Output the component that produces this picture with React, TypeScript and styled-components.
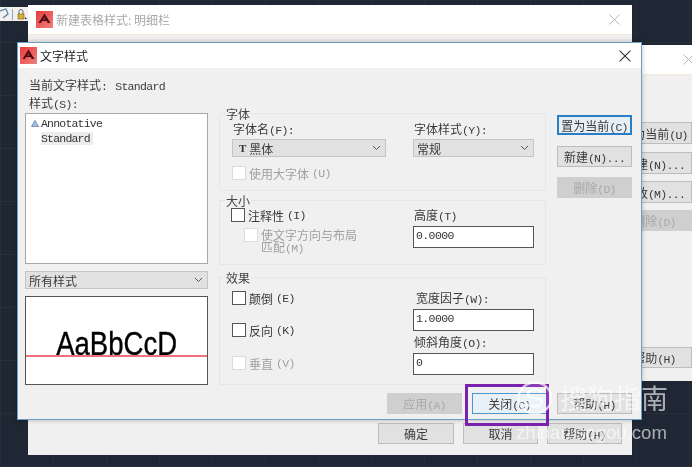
import React from "react";
import styled, { createGlobalStyle } from "styled-components";

const Global = createGlobalStyle`
  html, body { margin: 0; padding: 0; background: #1e2733; }
  body { width: 692px; height: 467px; overflow: hidden; }
  * { box-sizing: border-box; }
`;

const Desktop = styled.div`
  position: relative;
  width: 692px;
  height: 467px;
  overflow: hidden;
  font-family: "Noto Sans CJK SC", "Liberation Sans", sans-serif;
  font-size: 12px;
  color: #3a3a3a;
  filter: blur(0.35px);
  background-color: #1e2733;
  background-image:
    repeating-linear-gradient(90deg, rgba(255,255,255,0.035) 0 1px, transparent 1px 53px),
    repeating-linear-gradient(0deg, rgba(255,255,255,0.035) 0 1px, transparent 1px 53px);
`;

const Toolbar = styled.div`
  position: absolute;
  left: 0;
  top: 7px;
  width: 30px;
  height: 14px;
  background: #f0f0f0;
  display: flex;
  align-items: center;
  gap: 3px;
`;
const ToolSep = styled.span`
  width: 1px;
  height: 11px;
  background: #a0a0a0;
`;

const Win = styled.div<{ $l: number; $t: number; $w: number; $h: number; $active?: boolean }>`
  position: absolute;
  left: ${p => p.$l}px;
  top: ${p => p.$t}px;
  width: ${p => p.$w}px;
  height: ${p => p.$h}px;
  background: #f0f0f0;
  display: flex;
  flex-direction: column;
  ${p => p.$active ? "border: 1px solid #6d9fc6; box-shadow: 0 0 5px rgba(0,0,0,0.25);" : ""}
`;
const TitleBar = styled.div<{ $h: number; $faded?: boolean; $pl: number; $pr: number }>`
  flex: none;
  height: ${p => p.$h}px;
  background: #fff;
  display: flex;
  align-items: center;
  gap: 3px;
  padding: 0 ${p => p.$pr}px 0 ${p => p.$pl}px;
  font-size: 12px;
  color: ${p => p.$faded ? "#a8a8a8" : "#222"};
  ${p => p.$faded ? "border-bottom: 1px solid #f6e8d8;" : ""}
`;
const TitleText = styled.span`
  flex: 1;
  white-space: nowrap;
`;
const Body = styled.div`
  flex: 1;
  display: flex;
  flex-direction: column;
  padding: 9px 9px 0 7px;
  min-height: 0;
`;
const L = styled.span`
  font-family: "Liberation Mono", monospace;
  font-size: 11.5px;
  letter-spacing: -0.7px;
`;
const StdName = styled(L)`
  margin-left: 8px;
`;
const CurrentRow = styled.div`
  height: 16px;
  line-height: 16px;
  padding-left: 4px;
  white-space: nowrap;
`;
const StyleLabel = styled.div`
  height: 14px;
  line-height: 14px;
  margin-top: 3px;
  padding-left: 4px;
`;
const Columns = styled.div`
  display: grid;
  grid-template-columns: 183px 327px 75px;
  column-gap: 11px;
  margin-top: 3px;
`;
const LeftCol = styled.div`
  display: flex;
  flex-direction: column;
  gap: 7px;
`;
const ListBox = styled.div`
  height: 151px;
  background: #fff;
  border: 1px solid #a8a8a8;
  padding: 2px 5px 0 5px;
  display: flex;
  flex-direction: column;
`;
const ListItem = styled.div`
  display: flex;
  align-items: center;
  height: 15px;
  font-family: "Liberation Mono", monospace;
  font-size: 11.5px;
  letter-spacing: -0.8px;
  color: #333;
  gap: 2px;
`;
const ItemText = styled.span<{ $sel?: boolean }>`
  padding-right: 3px;
  margin-left: ${p => p.$sel ? "10px" : "0"};
  background: ${p => p.$sel ? "#ececec" : "transparent"};
`;
const Combo = styled.div<{ $w?: number; $h?: number }>`
  width: ${p => p.$w ? `${p.$w}px` : "100%"};
  height: ${p => p.$h ?? 18}px;
  background: #e1e1e1;
  border: 1px solid #c4c4c4;
  display: flex;
  align-items: center;
  padding: 0 4px 0 3px;
  gap: 2px;
`;
const ComboText = styled.span`
  flex: 1;
  white-space: nowrap;
`;
const FontGlyph = styled.span`
  font-family: "Liberation Serif", serif;
  font-weight: bold;
  font-size: 11px;
  color: #333;
  margin: 0 1px 0 3px;
`;
const Preview = styled.div`
  position: relative;
  height: 89px;
  background: #fff;
  border: 1px solid #555;
  display: flex;
  align-items: flex-end;
  justify-content: center;
`;
const PreviewText = styled.span`
  font-family: "Liberation Sans", sans-serif;
  font-size: 34px;
  line-height: 34px;
  color: #000;
  -webkit-text-stroke: 0.4px #000;
  transform: scaleX(0.81);
  white-space: nowrap;
  margin-bottom: 24px;
`;
const Baseline = styled.div`
  position: absolute;
  left: 0;
  right: 0;
  bottom: 27px;
  height: 2px;
  background: #f0707c;
`;

const MidCol = styled.div`
  display: flex;
  flex-direction: column;
`;
const Group = styled.div<{ $h: number; $mt?: number; $pl: number; $pt: number }>`
  position: relative;
  height: ${p => p.$h}px;
  margin-top: ${p => p.$mt ?? 0}px;
  border: 1px solid #e6e6e6;
  padding: ${p => p.$pt}px 0 0 ${p => p.$pl}px;
  display: grid;
  grid-template-columns: ${p => 193 - p.$pl}px 121px;
`;
const Legend = styled.span`
  position: absolute;
  left: 5px;
  top: -7px;
  height: 14px;
  line-height: 14px;
  padding: 0 1px;
  background: #f0f0f0;
  color: #444;
`;
const Stack = styled.div`
  display: flex;
  flex-direction: column;
`;
const FieldLabel = styled.div<{ $pl?: number; $mt?: number; $mb?: number }>`
  height: 14px;
  line-height: 14px;
  white-space: nowrap;
  padding-left: ${p => p.$pl ?? 1}px;
  margin-top: ${p => p.$mt ?? 0}px;
  margin-bottom: ${p => p.$mb ?? 3}px;
`;
const Check = styled.div<{ $off?: boolean; $mt?: number; $ml?: number }>`
  display: flex;
  align-items: center;
  gap: 3px;
  height: 14px;
  margin-top: ${p => p.$mt ?? 0}px;
  margin-left: ${p => p.$ml ?? 0}px;
  color: ${p => p.$off ? "#a0a0a0" : "#3a3a3a"};
  white-space: nowrap;
`;
const Box = styled.span<{ $off?: boolean }>`
  flex: none;
  width: 14px;
  height: 14px;
  background: #fff;
  border: 1px solid ${p => p.$off ? "#dcdcdc" : "#555"};
`;
const TwoLine = styled.div`
  font-size: 12px;
  line-height: 12px;
  color: #a0a0a0;
  white-space: nowrap;
  margin-top: 1px;
`;
const CheckTop = styled(Check)`
  align-items: flex-start;
  height: 25px;
`;
const Input = styled.div`
  width: 121px;
  height: 22px;
  background: #fff;
  border: 1px solid #555;
  padding: 0 0 3px 2px;
  display: flex;
  align-items: center;
  font-family: "Liberation Mono", monospace;
  font-size: 11.5px;
  letter-spacing: -0.6px;
  color: #333;
`;
const RightCol = styled.div`
  display: flex;
  flex-direction: column;
  padding-top: 2px;
`;
const Btn = styled.div<{ $kind?: "focus" | "hover" | "off"; $mt?: number; $push?: boolean; $h?: number; $w?: number }>`
  width: ${p => p.$w ?? 75}px;
  height: ${p => p.$h ?? 21}px;
  flex: none;
  margin-top: ${p => p.$push ? "auto" : `${p.$mt ?? 0}px`};
  display: flex;
  align-items: center;
  justify-content: center;
  white-space: nowrap;
  color: ${p => p.$kind === "off" ? "#a8a8a8" : "#3a3a3a"};
  background: ${p => p.$kind === "off" ? "#cfcfcf" : p.$kind === "hover" ? "#e9f1f8" : p.$kind === "focus" ? "#e6eef6" : "#e1e1e1"};
  border: ${p => p.$kind === "focus" ? "2px solid #2a7fc4" : p.$kind === "hover" ? "1px solid #4a97d0" : p.$kind === "off" ? "1px solid #cfcfcf" : "1px solid #bdbdbd"};
`;
const BottomRow = styled.div`
  display: flex;
  justify-content: flex-end;
  gap: 10px;
  margin-top: 8px;
`;
const BackButtons = styled.div`
  margin-top: auto;
  display: flex;
  justify-content: flex-end;
  gap: 9px;
  padding: 0 10px 11px 0;
`;
const SideButtons = styled.div`
  flex: 1;
  display: flex;
  flex-direction: column;
  padding: 47px 0 13px 17px;
`;
const Highlight = styled.div`
  position: absolute;
  left: 465px;
  top: 384px;
  width: 84px;
  height: 42px;
  border: 3px solid #7a22ae;
`;
const Mark = styled.div`
  position: absolute;
  left: 516px;
  top: 381px;
  width: 156px;
  color: rgba(255,255,255,0.62);
  white-space: nowrap;
`;
const MarkTop = styled.div`
  display: flex;
  align-items: center;
  gap: 8px;
  height: 34px;
  font-size: 27px;
  line-height: 34px;
`;
const MarkSub = styled.div`
  font-family: "Liberation Sans", sans-serif;
  font-size: 18.6px;
  line-height: 22px;
  margin-top: 7px;
`;

const AcadIcon = ({ size = 17 }: { size?: number }) => (
  <svg width={size} height={size} viewBox="0 0 17 17" style={{ flex: "none" }}>
    <defs>
      <linearGradient id="acad" x1="0" y1="0" x2="1" y2="1">
        <stop offset="0" stopColor="#e83a3a" />
        <stop offset="1" stopColor="#f08080" />
      </linearGradient>
    </defs>
    <rect width="17" height="17" fill="url(#acad)" />
    <path d="M8.5 2.5 L14.5 12 H11.8 L10.6 10 H6.2 L4.8 12 H2.5 Z" fill="#4a0c10" />
    <path d="M8.4 6 L9.6 8.4 H6.9 Z" fill="#c83030" />
  </svg>
);
const Close = ({ color, size = 11 }: { color: string; size?: number }) => (
  <svg width={size} height={size} viewBox="0 0 11 11" style={{ flex: "none" }}>
    <path d="M0.5 0.5 L10.5 10.5 M10.5 0.5 L0.5 10.5" stroke={color} strokeWidth="1" fill="none" />
  </svg>
);
const Chevron = () => (
  <svg width="9" height="6" viewBox="0 0 9 6" style={{ flex: "none" }}>
    <path d="M1 1 L4.5 4.5 L8 1" stroke="#555" strokeWidth="1" fill="none" />
  </svg>
);

export default function App() {
  return (
    <>
      <Global />
      <Desktop>
        <Toolbar>
          <svg width="9" height="12" viewBox="0 0 9 12" style={{ flex: "none" }}>
            <path d="M0 3 L6 1 L8 6 L3 10" stroke="#5a7fa8" strokeWidth="1.2" fill="none" />
          </svg>
          <ToolSep />
          <svg width="12" height="12" viewBox="0 0 12 12" style={{ flex: "none" }}>
            <path d="M3 6 V3.5 a2 2 0 0 1 4 0 V6" stroke="#666" fill="none" />
            <rect x="2" y="6" width="6" height="5" fill="#d8b030" stroke="#806010" strokeWidth="0.6" />
            <path d="M9 9 L11 11 L9 11 Z" fill="#222" />
          </svg>
        </Toolbar>

        <Win $l={600} $t={45} $w={100} $h={336}>
          <TitleBar $h={30} $pl={1} $pr={6} $faded>
            <TitleText />
            <Close color="#b8b8b8" />
          </TitleBar>
          <SideButtons>
            <Btn $h={22}><span>置为当前<L>(U)</L></span></Btn>
            <Btn $h={22} $mt={8}><span>新建<L>(N)...</L></span></Btn>
            <Btn $h={22} $mt={7}><span>修改<L>(M)...</L></span></Btn>
            <Btn $kind="off" $mt={7}><span>删除<L>(D)</L></span></Btn>
            <Btn $push><span>帮助<L>(H)</L></span></Btn>
          </SideButtons>
        </Win>

        <Win $l={28} $t={5} $w={604} $h={450}>
          <TitleBar $h={30} $pl={8} $pr={12} $faded>
            <AcadIcon />
            <TitleText>新建表格样式: 明细栏</TitleText>
            <Close color="#b8b8b8" />
          </TitleBar>
          <BackButtons>
            <Btn $w={76}>确定</Btn>
            <Btn>取消</Btn>
            <Btn><span>帮助<L>(H)</L></span></Btn>
          </BackButtons>
        </Win>

        <Win $l={17} $t={42} $w={625} $h={378} $active>
          <TitleBar $h={25} $pl={2} $pr={10}>
            <AcadIcon />
            <TitleText>文字样式</TitleText>
            <Close color="#333" size={12} />
          </TitleBar>
          <Body>
            <CurrentRow>当前文字样式<L>:</L><StdName>Standard</StdName></CurrentRow>
            <StyleLabel>样式<L>(S)</L><L>:</L></StyleLabel>
            <Columns>
              <LeftCol>
                <ListBox>
                  <ListItem>
                    <svg width="8" height="7" viewBox="0 0 8 7" style={{ flex: "none" }}>
                      <path d="M4 0.5 L7.5 6.5 H0.5 Z" fill="#a8c0dc" stroke="#5a7ca8" strokeWidth="0.8" />
                    </svg>
                    <ItemText>Annotative</ItemText>
                  </ListItem>
                  <ListItem><ItemText $sel>Standard</ItemText></ListItem>
                </ListBox>
                <Combo>
                  <ComboText>所有样式</ComboText>
                  <Chevron />
                </Combo>
                <Preview>
                  <PreviewText>AaBbCcD</PreviewText>
                  <Baseline />
                </Preview>
              </LeftCol>

              <MidCol>
                <Group $h={78} $pl={12} $pt={8}>
                  <Legend>字体</Legend>
                  <Stack>
                    <FieldLabel>字体名<L>(F)</L><L>:</L></FieldLabel>
                    <Combo $w={154}>
                      <FontGlyph>T</FontGlyph>
                      <ComboText>黑体</ComboText>
                      <Chevron />
                    </Combo>
                    <Check $off $mt={9}><Box $off />使用大字体<L>(U)</L></Check>
                  </Stack>
                  <Stack>
                    <FieldLabel>字体样式<L>(Y)</L><L>:</L></FieldLabel>
                    <Combo $w={121}>
                      <ComboText>常规</ComboText>
                      <Chevron />
                    </Combo>
                  </Stack>
                </Group>

                <Group $h={65} $mt={9} $pl={11} $pt={7}>
                  <Legend>大小</Legend>
                  <Stack>
                    <Check><Box />注释性<L>(I)</L></Check>
                    <CheckTop $off $mt={6} $ml={13}>
                      <Box $off />
                      <TwoLine>使文字方向与布局<br />匹配<L>(M)</L></TwoLine>
                    </CheckTop>
                  </Stack>
                  <Stack>
                    <FieldLabel $mb={4}>高度<L>(T)</L></FieldLabel>
                    <Input>0.0000</Input>
                  </Stack>
                </Group>

                <Group $h={108} $mt={12} $pl={12} $pt={13}>
                  <Legend>效果</Legend>
                  <Stack>
                    <Check><Box />颠倒<L>(E)</L></Check>
                    <Check $mt={18}><Box />反向<L>(K)</L></Check>
                    <Check $off $mt={19}><Box $off />垂直<L>(V)</L></Check>
                  </Stack>
                  <Stack>
                    <FieldLabel $pl={3} $mb={4}>宽度因子<L>(W)</L><L>:</L></FieldLabel>
                    <Input>1.0000</Input>
                    <FieldLabel $mt={4} $mb={4}>倾斜角度<L>(O)</L><L>:</L></FieldLabel>
                    <Input>0</Input>
                  </Stack>
                </Group>
              </MidCol>

              <RightCol>
                <Btn $kind="focus" $h={20}><span>置为当前<L>(C)</L></span></Btn>
                <Btn $mt={11}><span>新建<L>(N)...</L></span></Btn>
                <Btn $kind="off" $mt={10}><span>删除<L>(D)</L></span></Btn>
              </RightCol>
            </Columns>
            <BottomRow>
              <Btn $kind="off"><span>应用<L>(A)</L></span></Btn>
              <Btn $kind="hover"><span>关闭<L>(C)</L></span></Btn>
              <Btn><span>帮助<L>(H)</L></span></Btn>
            </BottomRow>
          </Body>
        </Win>

        <Highlight />
        <Mark>
          <MarkTop>
            <svg width="36" height="34" viewBox="0 0 36 34" style={{ flex: "none" }}>
              <ellipse cx="19" cy="17" rx="16.5" ry="15.5" fill="rgba(255,255,255,0.12)" stroke="rgba(255,255,255,0.7)" strokeWidth="2.4" />
              <path d="M26 11 C22 7 12 8 12 13 C12 19 26 15 26 21 C26 26 15 27 11 23" fill="none" stroke="rgba(255,255,255,0.7)" strokeWidth="2.6" />
            </svg>
            <span>搜狗指南</span>
          </MarkTop>
          <MarkSub>zhinan.sogou.com</MarkSub>
        </Mark>
      </Desktop>
    </>
  );
}
